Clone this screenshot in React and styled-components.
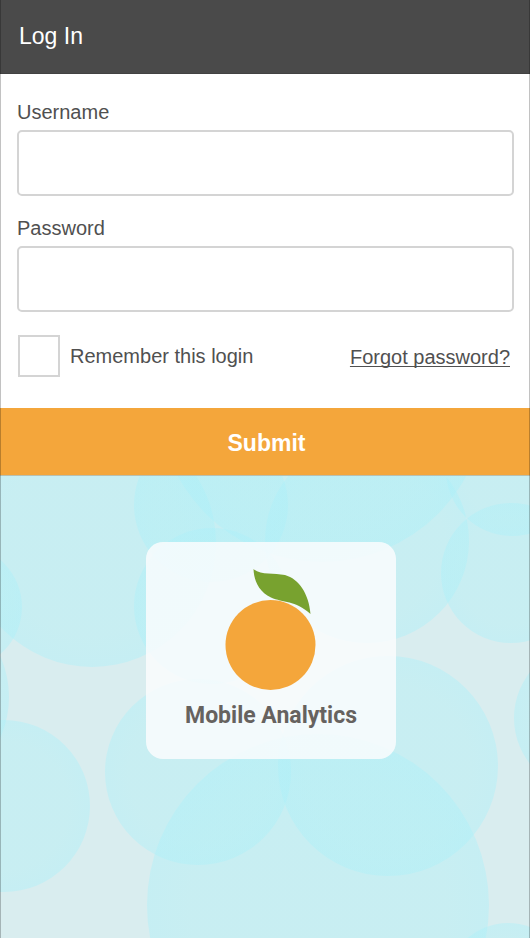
import React from "react";
import styled, { createGlobalStyle } from "styled-components";

const GlobalStyle = createGlobalStyle`
  *, *::before, *::after { box-sizing: border-box; }
  body {
    margin: 0;
    background: #d9edef;
    font-family: "Liberation Sans", Arial, sans-serif;
  }
`;

const Page = styled.div`
  position: relative;
  display: flex;
  flex-direction: column;
  min-height: 100vh;

  &::after {
    content: "";
    position: absolute;
    inset: 0;
    border: solid rgba(0, 0, 0, 0.24);
    border-width: 0 1px;
    pointer-events: none;
  }
`;

const Header = styled.header`
  padding: 22px 19px 23px;
  background: #4a4a4a;
  border-bottom: 1px solid #424242;
`;

const Title = styled.h1`
  margin: 0;
  color: #fff;
  font-size: 23px;
  font-weight: 400;
  line-height: 28px;
`;

const LoginForm = styled.form`
  display: flex;
  flex-direction: column;
  background: #fff;
`;

const Fields = styled.div`
  display: flex;
  flex-direction: column;
  gap: 20px;
  padding: 26px 16px 31px 17px;
`;

const Field = styled.div`
  display: flex;
  flex-direction: column;
  gap: 6px;
`;

const Label = styled.label`
  color: #505050;
  font-size: 20px;
  line-height: 24px;
`;

const TextInput = styled.input`
  width: 100%;
  height: 66px;
  padding: 0 16px;
  border: 2px solid #d4d4d4;
  border-radius: 5px;
  background: #fff;
  color: #505050;
  font: inherit;
  font-size: 20px;
`;

const Options = styled.div`
  display: flex;
  align-items: center;
  justify-content: space-between;
  padding: 3px 4px 0 1px;
`;

const Remember = styled.div`
  display: flex;
  align-items: center;
  gap: 10px;
`;

const Checkbox = styled.input`
  appearance: none;
  width: 42px;
  height: 42px;
  margin: 0;
  border: 2px solid #d4d4d4;
  background: #fff;

  &:checked {
    background: #f4a63b;
    box-shadow: inset 0 0 0 6px #fff;
  }
`;

const ForgotLink = styled.a`
  padding-top: 2px;
  color: #505050;
  font-size: 20px;
  line-height: 24px;
  text-decoration: underline;
  text-decoration-thickness: 1px;
  text-underline-offset: 2px;
  text-decoration-skip-ink: none;
`;

const SubmitButton = styled.button`
  padding: 21px 0 18px 3px;
  border: 0;
  border-bottom: 1px solid #b9bfae;
  background: #f4a63b;
  color: #fff;
  font-family: inherit;
  font-size: 23px;
  font-weight: 700;
  line-height: 28px;
  cursor: pointer;
`;

const BrandPanel = styled.main`
  position: relative;
  display: flex;
  flex: 1;
  align-items: flex-start;
  justify-content: center;
  min-height: 320px;
  padding: 66px 0 40px 12px;
  overflow: hidden;
  background: #d9edef;
`;

const Backdrop = styled.svg`
  position: absolute;
  inset: 0;
  width: 100%;
  height: 100%;
`;

const BrandCard = styled.section`
  position: relative;
  display: flex;
  flex-direction: column;
  align-items: center;
  gap: 11px;
  padding: 27px 39px 29px;
  border-radius: 17px;
  background: rgba(252, 253, 254, 0.82);
`;

const BrandName = styled.h2`
  margin: 0;
  color: #66625f;
  font-family: Roboto, sans-serif;
  font-size: 23px;
  font-weight: 700;
  line-height: 28px;
`;

const bubbles = [
  [92, 67, 124],
  [211, 29, 77],
  [212, 130, 78],
  [322, -78, 164],
  [367, 65, 102],
  [511, 97, 70],
  [512, -6, 66],
  [-40, 131, 62],
  [-91, 221, 100],
  [4, 330, 86],
  [198, 296, 93],
  [388, 290, 110],
  [318, 429, 171],
  [588, 242, 74],
  [508, 509, 62],
];

function Bubbles() {
  return (
    <Backdrop viewBox="0 0 530 462" preserveAspectRatio="xMidYMin slice" aria-hidden="true">
      <defs>
        <radialGradient id="bubble">
          <stop offset="0.75" stopColor="#acf0f7" stopOpacity="0.38" />
          <stop offset="1" stopColor="#acf0f9" stopOpacity="0.43" />
        </radialGradient>
      </defs>
      {bubbles.map(([cx, cy, r]) => (
        <circle key={`${cx},${cy}`} cx={cx} cy={cy} r={r} fill="url(#bubble)" />
      ))}
    </Backdrop>
  );
}

function OrangeLogo() {
  return (
    <svg width="92" height="122" viewBox="0 0 92 122" aria-hidden="true">
      <circle cx="45.5" cy="76" r="45" fill="#f4a63b" />
      <path
        d="M28.5 0 C36 6.5 49 3.5 60 6 C74 10 84 25 85.5 45 C70 31 58 34 46 28.5 C34 23 29 12 28.5 0 Z"
        fill="#78a22f"
      />
    </svg>
  );
}

export default function App() {
  return (
    <>
      <GlobalStyle />
      <Page>
        <Header>
          <Title>Log In</Title>
        </Header>
        <LoginForm onSubmit={(event) => event.preventDefault()}>
          <Fields>
            <Field>
              <Label htmlFor="username">Username</Label>
              <TextInput id="username" type="text" autoComplete="username" />
            </Field>
            <Field>
              <Label htmlFor="password">Password</Label>
              <TextInput id="password" type="password" autoComplete="current-password" />
            </Field>
            <Options>
              <Remember>
                <Checkbox id="remember" type="checkbox" />
                <Label htmlFor="remember">Remember this login</Label>
              </Remember>
              <ForgotLink href="#forgot">Forgot password?</ForgotLink>
            </Options>
          </Fields>
          <SubmitButton type="submit">Submit</SubmitButton>
        </LoginForm>
        <BrandPanel>
          <Bubbles />
          <BrandCard>
            <OrangeLogo />
            <BrandName>Mobile Analytics</BrandName>
          </BrandCard>
        </BrandPanel>
      </Page>
    </>
  );
}
